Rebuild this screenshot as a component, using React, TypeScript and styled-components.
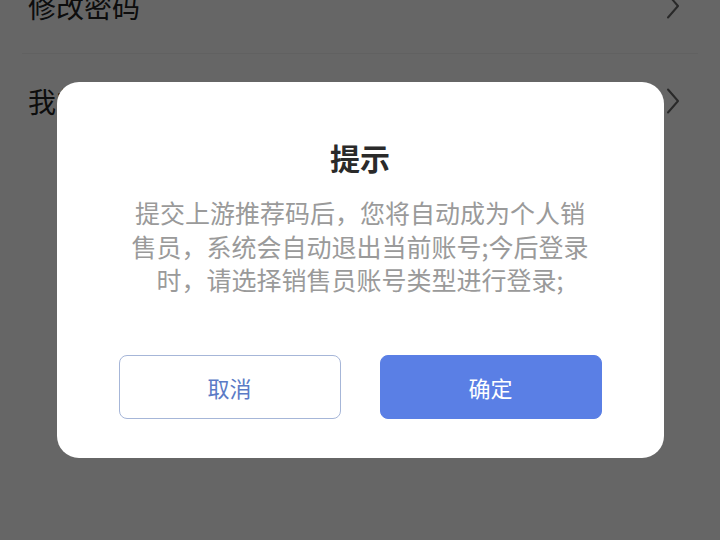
import React from "react";
import styled, { createGlobalStyle } from "styled-components";

const GlobalStyle = createGlobalStyle`
  html, body {
    margin: 0;
    padding: 0;
    width: 720px;
    height: 540px;
    overflow: hidden;
    background: #ffffff;
    font-family: "Noto Sans CJK SC", "Noto Sans", sans-serif;
  }
`;

const Page = styled.div`
  width: 720px;
  height: 540px;
  background: #ffffff;
  overflow: hidden;
`;

const List = styled.div`
  margin-top: -41px;
  display: flex;
  flex-direction: column;
`;

const Row = styled.div<{ $last?: boolean }>`
  height: 94px;
  margin: 0 22px;
  padding: 0 18px 0 6px;
  display: flex;
  align-items: center;
  justify-content: space-between;
  border-bottom: ${({ $last }) => ($last ? "none" : "1px solid #f2f2f2")};
  font-size: 28px;
  color: #222222;
`;

const Chevron = () => (
  <svg width="14" height="26" viewBox="0 0 14 26" fill="none">
    <path d="M2 1.5 L12 13 L2 24.5" stroke="#666666" strokeWidth="2" strokeLinecap="round" strokeLinejoin="round" />
  </svg>
);

const Overlay = styled.div`
  position: fixed;
  inset: 0;
  background: rgba(0, 0, 0, 0.6);
  display: flex;
  align-items: center;
  justify-content: center;
`;

const Dialog = styled.div`
  width: 607px;
  box-sizing: border-box;
  background: #ffffff;
  border-radius: 22px;
  padding: 54px 62px 39px;
  display: flex;
  flex-direction: column;
  align-items: center;
`;

const Title = styled.div`
  font-size: 30px;
  line-height: 42px;
  font-weight: 700;
  color: #2a2a2a;
`;

const Message = styled.div`
  margin-top: 18px;
  font-size: 25px;
  line-height: 33.5px;
  color: #9a9a9a;
  text-align: center;
`;

const Actions = styled.div`
  margin-top: 58px;
  width: 100%;
  display: flex;
  justify-content: space-between;
`;

const Button = styled.button<{ $primary?: boolean }>`
  width: 222px;
  height: 64px;
  box-sizing: border-box;
  border-radius: 8px;
  font-family: "Noto Sans CJK SC", "Noto Sans", sans-serif;
  font-size: 22px;
  cursor: pointer;
  border: 1px solid ${({ $primary }) => ($primary ? "#5a7fe5" : "#a6b6d8")};
  background: ${({ $primary }) => ($primary ? "#5a7fe5" : "#ffffff")};
  color: ${({ $primary }) => ($primary ? "#ffffff" : "#5b7bc6")};
`;

export default function App() {
  return (
    <>
      <GlobalStyle />
      <Page>
        <List>
          <Row>
            <span>修改密码</span>
            <Chevron />
          </Row>
          <Row $last>
            <span>我的推荐码</span>
            <Chevron />
          </Row>
        </List>
      </Page>
      <Overlay>
        <Dialog>
          <Title>提示</Title>
          <Message>
            提交上游推荐码后，您将自动成为个人销
            <br />
            售员，系统会自动退出当前账号;今后登录
            <br />
            时，请选择销售员账号类型进行登录;
          </Message>
          <Actions>
            <Button>取消</Button>
            <Button $primary>确定</Button>
          </Actions>
        </Dialog>
      </Overlay>
    </>
  );
}
